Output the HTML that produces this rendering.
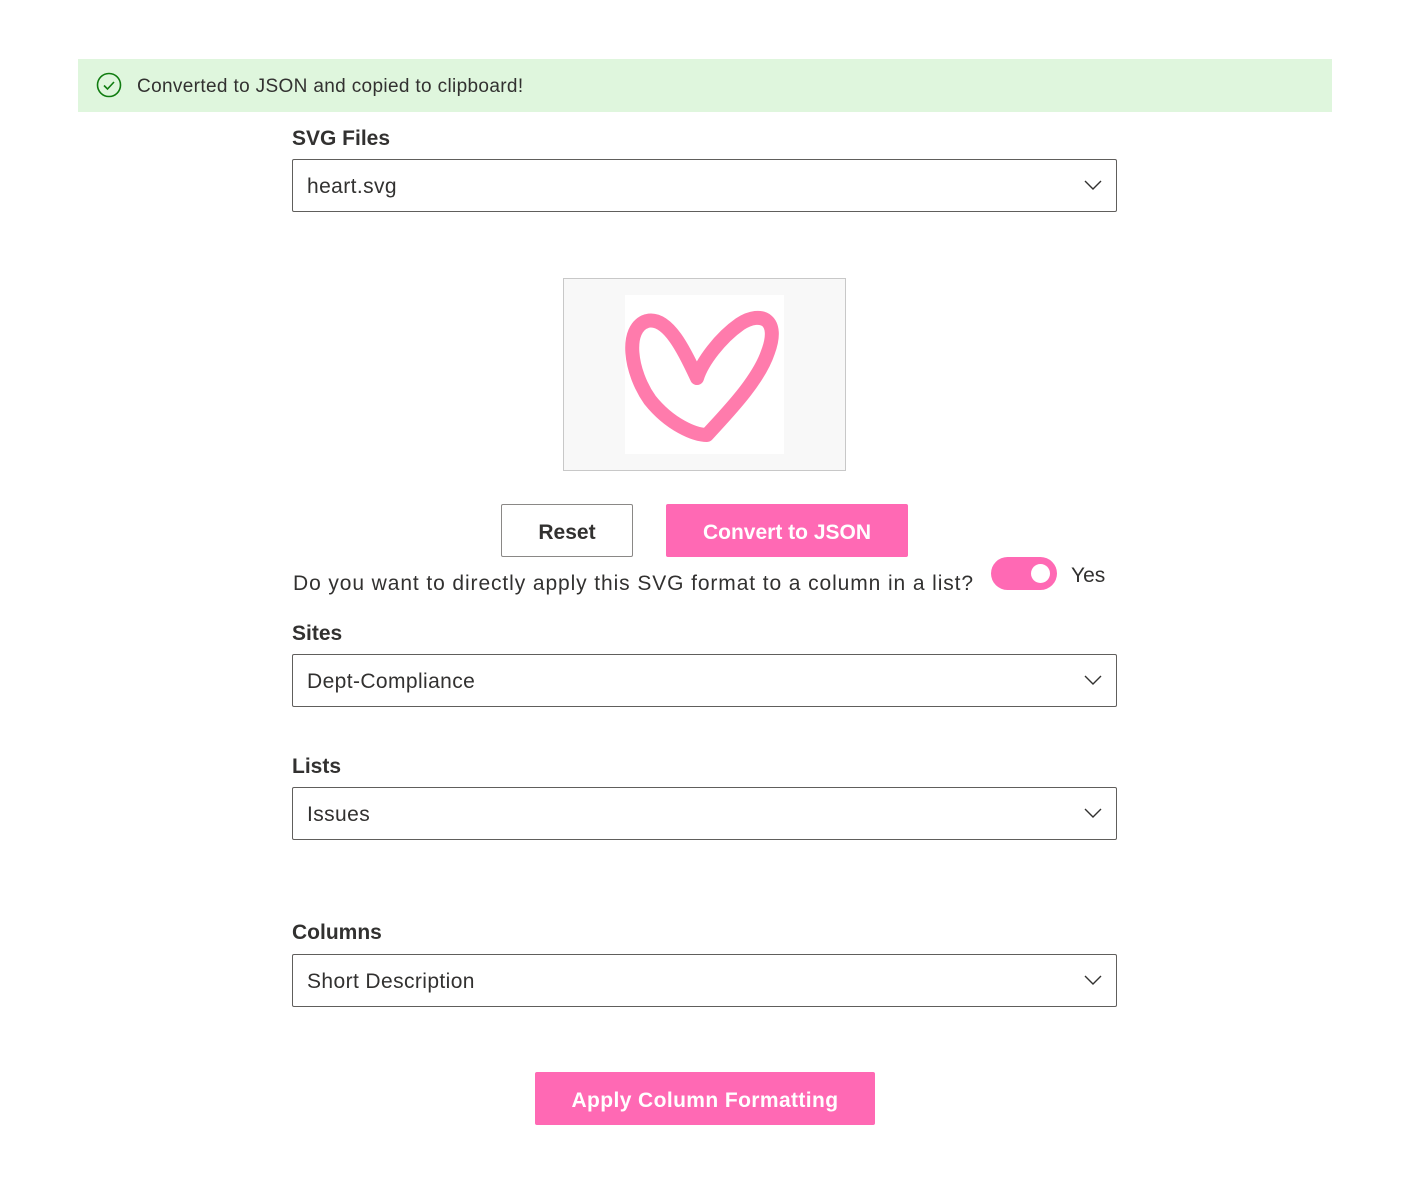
<!DOCTYPE html>
<html><head><style>
body{margin:0;width:1404px;height:1178px;background:#fff;font-family:"Liberation Sans",sans-serif;color:#323130;position:relative;overflow:hidden}
.abs{position:absolute}
.banner{left:78px;top:59px;width:1254px;height:53px;background:#dff6dd}
.label{font-size:21px;font-weight:bold;left:292px}
.dd{left:292px;width:823px;height:51px;border:1px solid #605e5c;border-radius:2px;font-size:21px;box-sizing:content-box;letter-spacing:0.4px}
.dd span{position:absolute;left:14px;top:15px}
.dd svg{position:absolute;right:14px;top:19px}
.btn{font-size:21px;font-weight:bold;text-align:center;border-radius:2px;box-sizing:border-box}
</style></head><body>
<div class="abs banner">
<svg class="abs" style="left:18px;top:13px" width="26" height="26" viewBox="0 0 26 26"><circle cx="13" cy="13" r="11.5" fill="none" stroke="#107c10" stroke-width="1.6"/><path d="M8 13.5l3.5 3.5 6.5-7" fill="none" stroke="#107c10" stroke-width="1.6"/></svg>
<div class="abs" style="left:59px;top:17px;font-size:19px;color:#323130;letter-spacing:0.35px">Converted to JSON and copied to clipboard!</div>
</div>
<div class="abs label" style="top:127px">SVG Files</div>
<div class="abs dd" style="top:159px"><span>heart.svg</span><svg width="18" height="12" viewBox="0 0 18 12"><path d="M1 2l8 8 8-8" fill="none" stroke="#323130" stroke-width="1.4"/></svg></div>
<div class="abs" style="left:563px;top:278px;width:281px;height:191px;border:1px solid #c8c8c8;background:#f8f8f8"></div>
<div class="abs" style="left:625px;top:295px;width:159px;height:159px;background:#fff"></div>
<svg class="abs" style="left:0;top:0" width="1404" height="1178"><path d="M697,378 C685,352 668,316 647,321 C624,328 630,372 650,400 C670,425 695,435 707,435 C725,415 758,382 768,352 C780,320 762,310 740,324 C720,338 702,362 697,378" fill="none" stroke="#ff7bac" stroke-width="14" stroke-linecap="round" stroke-linejoin="round"/></svg>
<div class="abs btn" style="left:501px;top:504px;width:132px;height:53px;border:1px solid #8a8886;line-height:55px">Reset</div>
<div class="abs btn" style="left:666px;top:504px;width:242px;height:53px;background:#ff69b4;color:#fff;line-height:57px">Convert to JSON</div>
<div class="abs" style="left:293px;top:572px;font-size:21px;letter-spacing:0.9px">Do you want to directly apply this SVG format to a column in a list?</div>
<div class="abs" style="left:991px;top:557px;width:66px;height:33px;border-radius:17px;background:#ff69b4"><div class="abs" style="left:40px;top:7px;width:19px;height:19px;border-radius:50%;background:#fff"></div></div>
<div class="abs" style="left:1071px;top:564px;font-size:21px">Yes</div>
<div class="abs label" style="top:622px">Sites</div>
<div class="abs dd" style="top:654px"><span>Dept-Compliance</span><svg width="18" height="12" viewBox="0 0 18 12"><path d="M1 2l8 8 8-8" fill="none" stroke="#323130" stroke-width="1.4"/></svg></div>
<div class="abs label" style="top:755px">Lists</div>
<div class="abs dd" style="top:787px"><span>Issues</span><svg width="18" height="12" viewBox="0 0 18 12"><path d="M1 2l8 8 8-8" fill="none" stroke="#323130" stroke-width="1.4"/></svg></div>
<div class="abs label" style="top:921px">Columns</div>
<div class="abs dd" style="top:954px"><span>Short Description</span><svg width="18" height="12" viewBox="0 0 18 12"><path d="M1 2l8 8 8-8" fill="none" stroke="#323130" stroke-width="1.4"/></svg></div>
<div class="abs btn" style="left:535px;top:1072px;width:340px;height:53px;background:#ff69b4;color:#fff;line-height:57px;letter-spacing:0.4px">Apply Column Formatting</div>
</body></html>
